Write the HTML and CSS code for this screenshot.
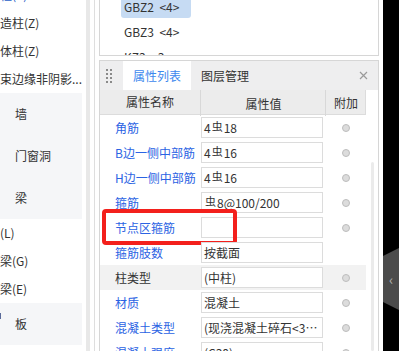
FILE: index.html
```html
<!DOCTYPE html>
<html lang="zh-CN">
<head>
  <meta charset="UTF-8" />
  <title>属性列表</title>
  <link rel="stylesheet" href="styles.css">
</head>
<body>
  <div class="sidebar">
    <div class="sub">
      <div class="sub-item cut">柱(Z)</div>
      <div class="sub-item">造柱(Z)</div>
      <div class="sub-item">体柱(Z)</div>
      <div class="sub-item">束边缘非阴影...</div>
    </div>
    <div class="cat">
      <div class="cat-item">墙</div>
      <div class="cat-item">门窗洞</div>
      <div class="cat-item">梁</div>
    </div>
    <div class="sub">
      <div class="sub-item">(L)</div>
      <div class="sub-item">梁(G)</div>
      <div class="sub-item">梁(E)</div>
    </div>
    <div class="cat">
      <div class="cat-item"><span class="mark"></span>板</div>
    </div>
  </div>

  <div class="split">
    <div class="rail"></div>
    <div class="rule"></div>
  </div>

  <div class="main">
    <div class="list-panel">
      <div class="list">
        <div class="list-item selected">GBZ2  &lt;4&gt;</div>
        <div class="list-item">GBZ3  &lt;4&gt;</div>
        <div class="list-item">KZ3  &lt;3&gt;</div>
      </div>
    </div>

    <div class="prop-panel">
      <div class="prop-head">
        <div class="grip">
          <i></i><i></i><i></i><i></i><i></i><i></i><i></i><i></i>
        </div>
        <div class="tab active">属性列表</div>
        <div class="tab">图层管理</div>
        <svg class="close" width="9" height="9" viewBox="0 0 9 9">
          <path d="M1 1L8 8M8 1L1 8" stroke="#9a9a9a" stroke-width="1.2" fill="none"/>
        </svg>
      </div>

      <div class="prop-body">
        <div class="table">
          <div class="row head">
            <div class="c-name">属性名称</div>
            <div class="c-val">属性值</div>
            <div class="c-add">附加</div>
          </div>
          <div class="row">
            <div class="c-name link">角筋</div>
            <div class="c-val"><div class="box">4<span class="bar">虫</span>18</div></div>
            <div class="c-add"><span class="radio"></span></div>
          </div>
          <div class="row">
            <div class="c-name link">B边一侧中部筋</div>
            <div class="c-val"><div class="box">4<span class="bar">虫</span>16</div></div>
            <div class="c-add"><span class="radio"></span></div>
          </div>
          <div class="row">
            <div class="c-name link">H边一侧中部筋</div>
            <div class="c-val"><div class="box">4<span class="bar">虫</span>16</div></div>
            <div class="c-add"><span class="radio"></span></div>
          </div>
          <div class="row">
            <div class="c-name link">箍筋</div>
            <div class="c-val"><div class="box"><span class="bar">虫</span>8@100/200</div></div>
            <div class="c-add"><span class="radio"></span></div>
          </div>
          <div class="row marked">
            <div class="c-name link">节点区箍筋</div>
            <div class="c-val"><div class="box"></div></div>
            <div class="c-add"><span class="radio"></span></div>
            <div class="redbox"></div>
          </div>
          <div class="row">
            <div class="c-name link">箍筋肢数</div>
            <div class="c-val"><div class="box">按截面</div></div>
            <div class="c-add"></div>
          </div>
          <div class="row shaded">
            <div class="c-name">柱类型</div>
            <div class="c-val"><div class="box">(中柱)</div></div>
            <div class="c-add"><span class="radio"></span></div>
          </div>
          <div class="row">
            <div class="c-name link">材质</div>
            <div class="c-val"><div class="box">混凝土</div></div>
            <div class="c-add"><span class="radio"></span></div>
          </div>
          <div class="row">
            <div class="c-name link">混凝土类型</div>
            <div class="c-val"><div class="box">(现浇混凝土碎石&lt;31.5mm)</div></div>
            <div class="c-add"><span class="radio"></span></div>
          </div>
          <div class="row">
            <div class="c-name link">混凝土强度</div>
            <div class="c-val"><div class="box">(C30)</div></div>
            <div class="c-add"><span class="radio"></span></div>
          </div>
        </div>
        <div class="scroll">
          <div class="track"></div>
        </div>
      </div>
    </div>
  </div>

  <div class="gutter"></div>

  <div class="dark">
    <div class="fold">‹</div>
  </div>
</body>
</html>
```

FILE: styles.css
```css
body {
  margin: 0;
  display: flex;
  height: 351px;
  overflow: hidden;
  background: #fff;
  font-family: "Noto Sans CJK SC", "Noto Sans", sans-serif;
  font-size: 12px;
  color: #333;
}

/* left tree */
.sidebar {
  width: 82px;
  flex: none;
  overflow: hidden;
  margin-top: -19px;
}

.sub-item {
  height: 28px;
  line-height: 28px;
  white-space: nowrap;
}

.sub-item.cut {
  color: #2a5fc8;
}

.cat {
  background: #f5f6f8;
}

.cat-item {
  height: 42px;
  line-height: 42px;
  padding-left: 15px;
  position: relative;
}

.mark {
  position: absolute;
  left: 0;
  top: 10px;
  width: 1px;
  height: 6px;
  background: #5b6b9a;
}

.split {
  width: 17px;
  flex: none;
  display: flex;
}

.rail {
  margin-left: 4px;
  width: 4px;
  background: #e8e8e8;
}

.rule {
  margin-left: 4px;
  width: 1px;
  background: #dedede;
}

/* middle */
.main {
  width: 280px;
  flex: none;
  display: flex;
  flex-direction: column;
  overflow: hidden;
}

.list-panel {
  flex: none;
  height: 56px;
  box-sizing: border-box;
  border: 1px solid #d6d6d6;
  border-top: none;
  overflow: hidden;
}

.list {
  margin-top: -4px;
  padding-left: 21px;
}

.list-item {
  width: fit-content;
  height: 22px;
  line-height: 22px;
  padding: 0 12px 0 3px;
  margin-bottom: 3px;
  border-radius: 3px;
  white-space: pre;
}

.list-item.selected {
  background: #c6dbf3;
}

.prop-panel {
  flex: 1;
  min-height: 0;
  margin-top: 4px;
  border: 1px solid #d6d6d6;
  border-bottom: none;
  display: flex;
  flex-direction: column;
}

.prop-head {
  flex: none;
  height: 29px;
  display: flex;
  align-items: center;
  background: #eeeeef;
}

.grip {
  display: grid;
  grid-template-columns: 2px 2px;
  gap: 2px;
  margin-left: 6px;
  margin-right: 11px;
}

.grip i {
  width: 2px;
  height: 2px;
  background: #8a8a8a;
}

.tab {
  height: 29px;
  line-height: 29px;
  padding: 0 10px;
  font-size: 12px;
}

.tab.active {
  background: #fff;
  color: #3d88ee;
}

.close {
  margin-left: auto;
  margin-right: 10px;
}

.prop-body {
  flex: 1;
  min-height: 0;
  display: flex;
}

.table {
  width: 266px;
  flex: none;
}

.row {
  display: grid;
  grid-template-columns: 100px 125px 41px;
  height: 25px;
  line-height: 25px;
  position: relative;
}

.row.head {
  height: 24px;
  line-height: 24px;
  background: #ececec;
  border-bottom: 1px solid #dcdcdc;
  border-right: 1px solid #dcdcdc;
  text-align: center;
}

.row.head div + div {
  border-left: 1px solid #d8d8d8;
}

.row.shaded {
  background: #f2f2f2;
}

.c-name {
  padding-left: 15px;
  white-space: nowrap;
}

.row.head .c-name {
  padding-left: 0;
}

.link {
  color: #2b63e3;
}

.c-val {
  padding: 2px 0 0 1px;
}

.box {
  width: 122px;
  height: 21px;
  box-sizing: border-box;
  border: 1px solid #dcdcdc;
  background: #fff;
  line-height: 19px;
  padding-left: 2px;
  white-space: nowrap;
  overflow: hidden;
  text-overflow: ellipsis;
}

.bar {
  font-size: 11px;
  position: relative;
  top: -2px;
  margin: 0 1px;
}

.c-add {
  display: flex;
  align-items: center;
  justify-content: center;
}

.radio {
  width: 8px;
  height: 8px;
  box-sizing: border-box;
  border-radius: 50%;
  background: #dcdcdc;
  border: 1px solid #bdbdbd;
}

.redbox {
  position: absolute;
  left: 2px;
  top: -6px;
  width: 135px;
  height: 36px;
  box-sizing: border-box;
  border: 4px solid #f3201c;
  border-radius: 4px;
}

.scroll {
  flex: 1;
  padding-left: 5px;
  padding-top: 72px;
}

.track {
  width: 3px;
  height: 100%;
  border-radius: 2px;
  background: #ebebeb;
}

.gutter {
  width: 4px;
  flex: none;
}

.dark {
  width: 16px;
  flex: none;
  background: #000;
}

.fold {
  margin-top: 248px;
  height: 62px;
  line-height: 62px;
  background: #4b4b4b;
  color: #b5b5b5;
  text-align: center;
  font-size: 14px;
  clip-path: polygon(0 8px, 100% 0, 100% 100%, 0 calc(100% - 8px));
}
```
